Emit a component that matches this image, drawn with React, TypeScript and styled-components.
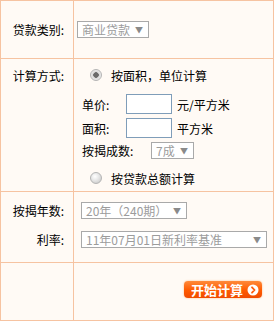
import styled, { createGlobalStyle } from "styled-components";

const GlobalStyle = createGlobalStyle`
  html, body {
    margin: 0;
    padding: 0;
    background: #ffffff;
  }
  * {
    box-sizing: border-box;
  }
`;

export default function App() {
  return (
    <>
      <GlobalStyle />
      <Panel>
        <Row $height={57}>
          <LabelCell $align="center">
            <Label>贷款类别:</Label>
          </LabelCell>
          <FieldCell $align="center">
            <FakeSelect $width={72} $offset={3}>
              <span>商业贷款</span>
              <Arrow>▼</Arrow>
            </FakeSelect>
          </FieldCell>
        </Row>

        <Row $height={132}>
          <LabelCell $align="flex-start" $padTop={9}>
            <Label>计算方式:</Label>
          </LabelCell>
          <FieldCell $align="flex-start" $padTop={8} $column>
            <RadioLine>
              <Radio $checked />
              <span>按面积，单位计算</span>
            </RadioLine>
            <SubLine $gap={11}>
              <SubLabel>单价:</SubLabel>
              <TextBox />
              <Unit>元/平方米</Unit>
            </SubLine>
            <SubLine $gap={4}>
              <SubLabel>面积:</SubLabel>
              <TextBox />
              <Unit>平方米</Unit>
            </SubLine>
            <SubLine $gap={4}>
              <SubLabel $wide>按揭成数:</SubLabel>
              <FakeSelect $width={43} $offset={0}>
                <span>7成</span>
                <Arrow>▼</Arrow>
              </FakeSelect>
            </SubLine>
            <RadioLine $gap={11}>
              <Radio />
              <span>按贷款总额计算</span>
            </RadioLine>
          </FieldCell>
        </Row>

        <Row $height={70}>
          <LabelCell $align="flex-start" $padTop={10} $column>
            <StackLabel>按揭年数:</StackLabel>
            <StackLabel $gap={12}>利率:</StackLabel>
          </LabelCell>
          <FieldCell $align="flex-start" $padTop={10} $column>
            <FakeSelect $width={106} $offset={7}>
              <span>20年（240期）</span>
              <Arrow>▼</Arrow>
            </FakeSelect>
            <SelectGap />
            <FakeSelect $width={186} $offset={7}>
              <span>11年07月01日新利率基准</span>
              <Arrow>▼</Arrow>
            </FakeSelect>
          </FieldCell>
        </Row>

        <Row $height={57} $last>
          <LabelCell $align="center" />
          <FieldCell $align="flex-start" $padTop={18} $end>
            <StartButton type="button">
              开始计算
              <svg width="12" height="12" viewBox="0 0 12 12">
                <circle cx="6" cy="6" r="5.5" fill="#ffffff" />
                <path
                  d="M5 3.3 L7.6 6 L5 8.7"
                  stroke="#ff5a0a"
                  strokeWidth="1.8"
                  fill="none"
                  strokeLinecap="round"
                  strokeLinejoin="round"
                />
              </svg>
            </StartButton>
          </FieldCell>
        </Row>
      </Panel>
    </>
  );
}

const Panel = styled.div`
  width: 274px;
  height: 321px;
  border: 1px solid #f6c3a1;
  background: #fffaf5;
  display: flex;
  flex-direction: column;
  font-family: "Noto Sans CJK SC", "Noto Sans", sans-serif;
  font-size: 12px;
  color: #000000;
`;

const Row = styled.div<{ $height: number; $last?: boolean }>`
  display: flex;
  height: ${(p) => p.$height + (p.$last ? 0 : 1)}px;
  border-bottom: ${(p) => (p.$last ? "none" : "1px solid #f6c3a1")};
`;

const LabelCell = styled.div<{
  $align: string;
  $padTop?: number;
  $column?: boolean;
}>`
  width: 73px;
  border-right: 1px solid #f6c3a1;
  display: flex;
  flex-direction: ${(p) => (p.$column ? "column" : "row")};
  align-items: ${(p) => (p.$column ? "flex-end" : p.$align)};
  justify-content: flex-end;
  ${(p) => (p.$column ? "justify-content: flex-start;" : "")}
  padding-top: ${(p) => p.$padTop ?? 0}px;
  padding-right: 9px;
`;

const FieldCell = styled.div<{
  $align: string;
  $padTop?: number;
  $column?: boolean;
  $end?: boolean;
}>`
  flex: 1;
  display: flex;
  flex-direction: ${(p) => (p.$column ? "column" : "row")};
  align-items: ${(p) => (p.$column ? "flex-start" : p.$align)};
  justify-content: ${(p) => (p.$end ? "flex-end" : "flex-start")};
  padding-top: ${(p) => p.$padTop ?? 0}px;
  padding-right: ${(p) => (p.$end ? 11 : 0)}px;
`;

const Label = styled.span`
  line-height: 16px;
  white-space: nowrap;
`;

const StackLabel = styled.span<{ $gap?: number }>`
  line-height: 17px;
  margin-top: ${(p) => p.$gap ?? 0}px;
  white-space: nowrap;
`;

const FakeSelect = styled.div<{ $width: number; $offset: number }>`
  width: ${(p) => p.$width}px;
  height: 17px;
  margin-left: ${(p) => p.$offset}px;
  border: 1px solid #a9a9a9;
  background: #ffffff;
  color: #9c9c9c;
  display: flex;
  align-items: center;
  justify-content: space-between;
  padding: 0 5px 0 4px;
  line-height: 15px;
  white-space: nowrap;
`;

const Arrow = styled.span`
  font-size: 8px;
  color: #8a8a8a;
  margin-left: 4px;
`;

const SelectGap = styled.div`
  height: 12px;
`;

const RadioLine = styled.div<{ $gap?: number }>`
  display: flex;
  align-items: center;
  height: 16px;
  margin-top: ${(p) => p.$gap ?? 0}px;
  padding-left: 16px;
  gap: 9px;
  font-size: 12px;
  white-space: nowrap;
`;

const Radio = styled.span<{ $checked?: boolean }>`
  width: 12px;
  height: 12px;
  border-radius: 50%;
  border: 1px solid #b4b4b4;
  background: ${(p) =>
    p.$checked
      ? "radial-gradient(circle at 50% 50%, #6b6b6b 0 2.5px, #d8d8d8 3px, #f4f4f4 6px)"
      : "radial-gradient(circle at 40% 35%, #ffffff 0, #e6e6e6 4px, #cfcfcf 7px)"};
`;

const SubLine = styled.div<{ $gap: number }>`
  display: flex;
  align-items: center;
  margin-top: ${(p) => p.$gap}px;
  padding-left: 8px;
  white-space: nowrap;
`;

const SubLabel = styled.span<{ $wide?: boolean }>`
  width: ${(p) => (p.$wide ? 69 : 44)}px;
`;

const TextBox = styled.input`
  width: 46px;
  height: 20px;
  border: 1px solid #7f9db9;
  background: #ffffff;
  padding: 0;
  margin: 0;
  outline: none;
`;

const Unit = styled.span`
  margin-left: 5px;
`;

const StartButton = styled.button`
  height: 17px;
  width: 78px;
  border: none;
  border-radius: 4px;
  padding: 0 0 0 4px;
  display: flex;
  align-items: center;
  justify-content: center;
  gap: 4px;
  color: #ffffff;
  font-family: "Noto Sans CJK SC", "Noto Sans", sans-serif;
  font-size: 13px;
  font-weight: bold;
  background: linear-gradient(#ff8a3a, #ff5a00 55%, #f04a00);
  box-shadow: 0 0 2px #ffb27a;
  cursor: pointer;
`;
